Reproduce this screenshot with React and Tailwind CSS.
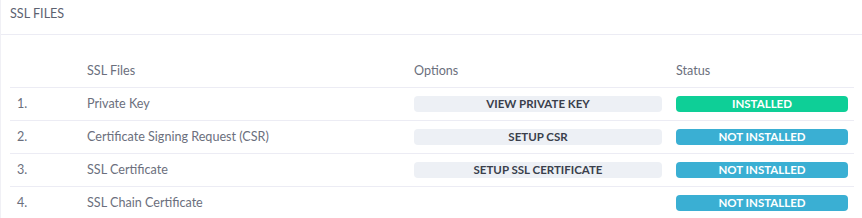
import React from 'react'

// ─── Filas de la tabla ───
const ROWS = [
  { n: '1.', name: 'Private Key', action: 'VIEW PRIVATE KEY', installed: true },
  { n: '2.', name: 'Certificate Signing Request (CSR)', action: 'SETUP CSR', installed: false },
  { n: '3.', name: 'SSL Certificate', action: 'SETUP SSL CERTIFICATE', installed: false },
  { n: '4.', name: 'SSL Chain Certificate', action: null, installed: false }
]

export default function App() {
  return (
    <div className="w-[862px] h-[218px] overflow-hidden bg-white text-[12.6px] text-[#6b6f7d]" style={{ fontFamily: 'Lato, "Open Sans", sans-serif' }}>
      <div className="border-l border-[#f0f0f5] h-full">
        {/* Cabecera de la tarjeta */}
        <div className="h-[35px] border-b border-[#ececf4] pl-[9px] flex items-center">
          <span className="text-[12.6px] text-[#5d6270] -mt-[6px]">SSL FILES</span>
        </div>

        {/* Tabla */}
        <div className="pl-[9px] pr-[8px] pt-[21px]">
          <div className="grid grid-cols-[70px_327px_262px_186px] h-[32px] items-center border-b border-[#ececf4]">
            <div className="px-[7px]"></div>
            <div className="px-[7px]">SSL Files</div>
            <div className="px-[7px]">Options</div>
            <div className="px-[7px]">Status</div>
          </div>
          {ROWS.map(row => (
            <div key={row.n} className="grid grid-cols-[70px_327px_262px_186px] h-[33px] items-center border-b border-[#ececf4]">
              <div className="px-[7px]">{row.n}</div>
              <div className="px-[7px]">{row.name}</div>
              <div className="px-[7px]">
                {row.action && (
                  <button className="w-full h-[16px] rounded-[4px] bg-[#edf0f5] text-[11.5px] font-bold text-[#3a3f4c] leading-none flex items-center justify-center">
                    {row.action}
                  </button>
                )}
              </div>
              <div className="px-[7px]">
                <span className={`w-full h-[16px] rounded-[4px] text-[11.5px] font-bold text-white leading-none flex items-center justify-center ${
                  row.installed ? 'bg-[#0ecf97]' : 'bg-[#3aafd3]'
                }`}>
                  {row.installed ? 'INSTALLED' : 'NOT INSTALLED'}
                </span>
              </div>
            </div>
          ))}
        </div>
      </div>
    </div>
  )
}
